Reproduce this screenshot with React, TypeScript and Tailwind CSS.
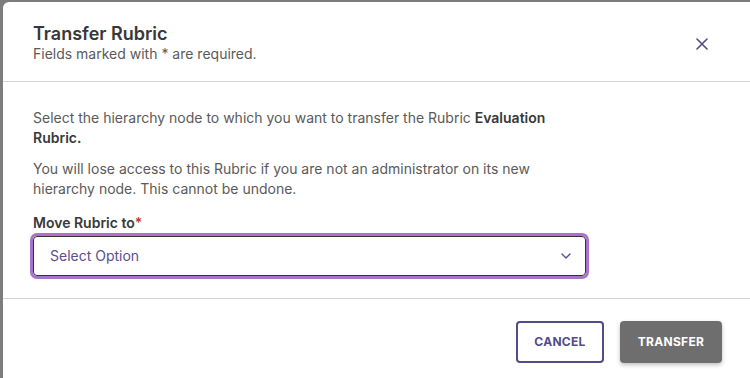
import React from 'react';

const CloseIcon: React.FC = () => (
    <svg width="12" height="12" viewBox="0 0 12 12" fill="none" stroke="#524c88" strokeWidth="1.6" strokeLinecap="round">
        <path d="M1 1l10 10M11 1L1 11" />
    </svg>
);

const ChevronDown: React.FC = () => (
    <svg width="10" height="6" viewBox="0 0 10 6" fill="none" stroke="#5c4e8f" strokeWidth="1.4" strokeLinecap="round" strokeLinejoin="round">
        <path d="M1 1l4 4 4-4" />
    </svg>
);

export default function App() {
    return (
        <div className="w-[750px] h-[378px] overflow-hidden bg-[#7d7d7d] pl-[3px] pt-[2px] flex" style={{ fontFamily: 'Inter, "Noto Sans", sans-serif' }}>
            <div className="flex-1 bg-white rounded-tl-[6px] flex flex-col">
                <div className="h-[80px] border-b border-[#d4d4d4] flex justify-between pl-[30px] pr-[42px] pt-[21px]">
                    <div>
                        <h2 className="text-[18px] leading-[22px] font-semibold text-[#383838]">Transfer Rubric</h2>
                        <p className="text-[14px] leading-[18px] text-[#5a5a5a]">Fields marked with * are required.</p>
                    </div>
                    <button type="button" className="mt-[15px] h-[12px]">
                        <CloseIcon />
                    </button>
                </div>

                <div className="pl-[30px] pt-[26px] pb-[22px] border-b border-[#d4d4d4]">
                    <div className="w-[553px] text-[14px] leading-[20px] text-[#5a5a5a]">
                        <p>
                            Select the hierarchy node to which you want to transfer the Rubric <span className="font-semibold text-[#383838]">Evaluation Rubric.</span>
                        </p>
                        <p className="mt-[11px]">
                            You will lose access to this Rubric if you are not an administrator on its new hierarchy node. This cannot be undone.
                        </p>
                        <label className="block mt-[14px] font-semibold text-[#383838]">
                            Move Rubric to<span className="text-[#c0392b]">*</span>
                        </label>
                        <div className="mt-[3px] h-[40px] border border-[#333333] rounded-[4px] ring-[3px] ring-[#a972cb] flex items-center justify-between pl-[16px] pr-[14px]">
                            <span className="text-[#5c4e8f]">Select Option</span>
                            <ChevronDown />
                        </div>
                    </div>
                </div>

                <div className="flex justify-end gap-[16px] pt-[22px] pr-[28px]">
                    <button type="button" className="w-[88px] h-[42px] border-2 border-[#524c88] rounded-[4px] text-[12px] font-bold tracking-[0.3px] text-[#524c88]">
                        CANCEL
                    </button>
                    <button type="button" className="w-[102px] h-[42px] bg-[#6e6e6e] rounded-[4px] text-[12px] font-bold tracking-[0.3px] text-white shadow-[0_2px_4px_rgba(0,0,0,0.25)]">
                        TRANSFER
                    </button>
                </div>
            </div>
        </div>
    );
}
